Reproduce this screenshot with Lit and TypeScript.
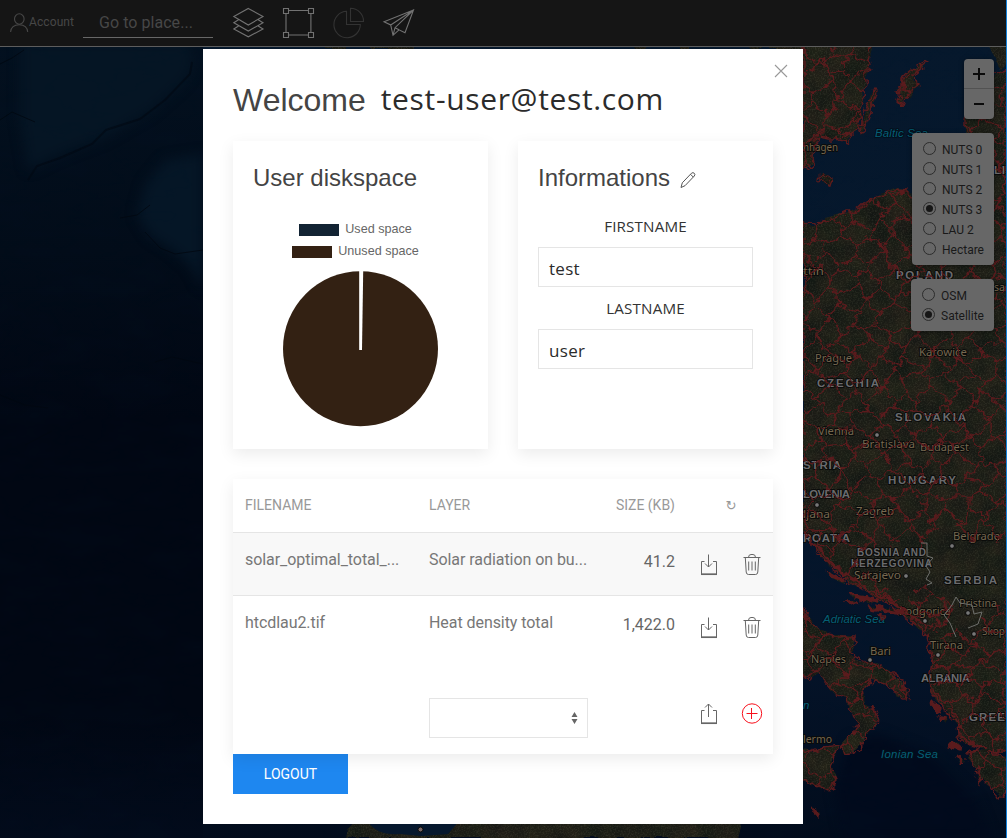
import { LitElement, html, css, svg } from "lit";
import { customElement, property } from "lit/decorators.js";

const SWEDEN =
  "M803 40H873L870 52L868 60L870 68L865 76L867 84L863 92L864 100L860 108L861 118L858 124L860 128L852 134L847 142L838 139L828 139L820 137L814 146L813 155L814 164L808 169L803 168Z";
const GOTLAND = "M920 64L927 62L924 67L916 74L914 80L919 84L913 88L911 95L905 99L902 106L899 103L901 95L897 91L902 88L902 80L907 73L912 69L917 70Z";
const OLAND = "M874 88L877 91L873 105L868 120L862 135L860 130L864 114L870 100Z";
const BORNHOLM = "M822 173L832 179L830 186L821 180Z";
const CONTINENT =
  "M803 221L812 226L826 219L845 214L855 211L864 203L880 195L897 190L907 191L912 196L920 200L935 195L965 170L965 119L970 96L990 82L995 74L1007 70V752L985 752L1007 757V790L999 798L993 788L987 786L982 778L980 784L976 768L968 758L970 750L984 748L968 744L959 736L958 724L948 714L940 702L931 692L929 680L932 662L929 645L926 633L915 624L904 617L892 606L870 594L850 582L830 566L818 552L811 540L803 530Z";
const ITALY =
  "M795 595L803 608L812 624L822 632L832 636L853 636L855 644L850 652L862 660L878 666L892 673L904 681L908 692L906 700L897 694L895 689L885 684L872 681L862 690L864 704L875 710L878 718L877 727L869 730L864 743L855 753L845 755L842 745L852 734L858 724L850 711L846 697L835 693L825 682L818 672L808 677L795 670Z";
const SICILY = "M795 748L812 752L825 747L841 745L834 757L831 768L836 779L830 791L818 787L795 776Z";
const ISLANDS =
  "M812 807L820 813L817 816ZM828 572L845 580L846 583L831 577ZM850 594L880 600L878 603L854 598ZM868 606L900 611L899 614L872 609ZM845 602L856 602L850 605ZM876 616L886 616L881 618ZM932 700L940 708L938 712L933 706ZM950 742L960 744L959 750L951 748ZM957 756L964 762L960 764ZM939 717L946 718L943 722Z";
const NORTH = "M325 40H345V49H325ZM368 40H416L412 49H372ZM628 40H652L645 49H634ZM680 40H690V49H680ZM745 40H803V60L795 49H750Z";
const AFRICA =
  "M345 838Q348 822 372 815L745 815L738 838ZM985 40H1007V62L1000 72L996 58Z";
const BAY = "M368 822Q378 836 400 834L421 836L448 834L460 820Z";
const NUTS =
  "M803 40H1007V540L990 545L972 540L960 530L945 520L928 545L890 545L850 552L868 575L890 590L905 605L915 590L925 588L952 605L948 625L930 628L928 640L957 630L957 652L953 680L948 690L945 760L803 800V660H803ZM950 632L1007 600V838H950L945 705Z";

/* Honeycomb of jittered vertices used for the administrative borders. */
function borderMesh(): string {
  let seed = 41;
  const rnd = () => {
    seed = (seed * 16807) % 2147483647;
    return seed / 2147483647;
  };
  const w = 13;
  const h = 17;
  const pts: number[][][] = [];
  for (let r = 0; r < 50; r++) {
    const row: number[][] = [];
    for (let c = 0; c < 19; c++) {
      const off = (r + c) % 2 ? 5 : -5;
      row.push([790 + c * w + (rnd() - 0.5) * 12, 38 + r * h + off + (rnd() - 0.5) * 11]);
    }
    pts.push(row);
  }
  let d = "";
  for (let r = 0; r < 50; r++) {
    d += "M" + pts[r].map((p) => p[0].toFixed(1) + " " + p[1].toFixed(1)).join("L");
    if (r < 49) {
      for (let c = 0; c < 19; c++) {
        if ((r + c) % 2) {
          const a = pts[r][c];
          const b = pts[r + 1][c];
          d += `M${a[0].toFixed(1)} ${a[1].toFixed(1)}L${b[0].toFixed(1)} ${b[1].toFixed(1)}`;
        }
      }
    }
  }
  return d;
}
const MESH = borderMesh();

type Label = [string, number, number, number];
const CITIES: Label[] = [
  ["nhagen", 803, 151, 35], ["ttin", 803, 275, 21], ["Prague", 815, 362, 37], ["Katowice", 919, 356, 48],
  ["Vienna", 818, 435, 36], ["Bratislava", 862, 448, 53], ["Budapest", 920, 451, 49], ["Zagreb", 856, 515, 38],
  ["ljana", 803, 518, 27], ["Belgrade", 953, 540, 47], ["Sarajevo", 854, 579, 47], ["Podgorica", 899, 615, 52],
  ["Pristina", 959, 607, 38], ["Skop", 982, 635, 23], ["Tirana", 930, 649, 33], ["Bari", 870, 655, 21],
  ["Naples", 811, 663, 35], ["lermo", 803, 743, 29], ["sa", 994, 291, 11],
];
const COUNTRIES: Label[] = [
  ["POLAND", 896, 279, 57], ["CZECHIA", 817, 387, 62], ["SLOVAKIA", 895, 421, 71], ["HUNGARY", 888, 484, 68],
  ["STRIA", 803, 469, 38], ["LOVENIA", 803, 498, 47], ["ROATIA", 803, 542, 47],
  ["SERBIA", 944, 584, 53], ["ALBANIA", 921, 682, 49], ["GREE", 969, 721, 36], ["LI", 994, 174, 11],
];
const SMALL: Label[] = [["BOSNIA AND", 857, 556, 69], ["HERZEGOVINA", 851, 567, 81]];
const SEAS: Label[] = [["Baltic Sea", 875, 137, 53], ["Adriatic Sea", 823, 623, 62], ["Ionian Sea", 881, 758, 57], ["n", 803, 709, 7]];
const DOTS = [[877, 435], [817, 505], [952, 546], [906, 576], [925, 621], [968, 613], [974, 634], [938, 655], [870, 660]];

@customElement("satellite-map")
class SatelliteMap extends LitElement {
  static styles = css`
    :host { display: block; }
    .map { display: block; width: 1007px; height: 838px; }
    filter { color-interpolation-filters: sRGB; }
    .label { paint-order: stroke; stroke: #0a0b0a; stroke-width: 2px; stroke-linejoin: round; }
    .city { font: 11.5px "Noto Sans", sans-serif; fill: #75674f; }
    .country { font: bold 11.5px "Liberation Sans", sans-serif; fill: #6b6b6e; }
    .small { font: bold 10px "Liberation Sans", sans-serif; fill: #6b6b6e; }
    .sea { font: italic 11.5px "Liberation Sans", sans-serif; fill: #055f76; stroke: #03101c; }
  `;

  private labels(items: Label[], kind: string) {
    return items.map(
      ([t, x, y, w]) =>
        svg`<text class="label ${kind}" x=${x} y=${y} textLength=${w} lengthAdjust=${kind === "city" ? "spacingAndGlyphs" : "spacing"}>${t}</text>`
    );
  }

  render() {
    const land = [SWEDEN, GOTLAND, OLAND, BORNHOLM, CONTINENT, ITALY, SICILY, ISLANDS, NORTH, AFRICA].join("");
    return html`<svg class="map" viewBox="0 0 1007 838">
      <defs>
        <linearGradient id="sea" x1="0" y1="0" x2="0" y2="1">
          <stop offset="0" stop-color="#06182c" /><stop offset=".55" stop-color="#05172d" />
          <stop offset=".8" stop-color="#041328" /><stop offset="1" stop-color="#020c1c" />
        </linearGradient>
        <linearGradient id="ocean" x1="0" y1="0" x2="0" y2="1">
          <stop offset="0" stop-color="#031120" /><stop offset=".3" stop-color="#020c19" />
          <stop offset=".5" stop-color="#010713" /><stop offset=".85" stop-color="#010713" />
          <stop offset="1" stop-color="#020b1b" />
        </linearGradient>
        <filter id="soft" x="-20%" y="-20%" width="140%" height="140%"><feGaussianBlur stdDeviation="6" /></filter>
        <filter id="ground" filterUnits="userSpaceOnUse" x="320" y="40" width="690" height="800">
          <feTurbulence type="fractalNoise" baseFrequency=".045" numOctaves="4" seed="5" result="broad" />
          <feColorMatrix in="broad" values=".1 0 0 0 .055  .06 .03 0 0 .065  .03 0 0 0 .068  0 0 0 0 1" result="tone" />
          <feTurbulence type="fractalNoise" baseFrequency=".65" numOctaves="2" seed="9" />
          <feColorMatrix values=".3 0 0 0 -.13  .3 0 0 0 -.13  .25 0 0 0 -.11  0 0 0 0 1" result="grain" />
          <feComposite in="tone" in2="grain" operator="arithmetic" k2="1" k3=".6" result="mix" />
          <feDisplacementMap in="SourceAlpha" in2="broad" scale="7" xChannelSelector="R" yChannelSelector="G" result="shape" />
          <feComposite in="mix" in2="shape" operator="in" />
        </filter>
        <filter id="rough" filterUnits="userSpaceOnUse" x="800" y="40" width="210" height="800">
          <feTurbulence type="fractalNoise" baseFrequency=".13" numOctaves="2" seed="3" />
          <feDisplacementMap in="SourceGraphic" scale="11" xChannelSelector="R" yChannelSelector="G" />
        </filter>
        <filter id="relief" filterUnits="userSpaceOnUse" x="0" y="40" width="1007" height="800">
          <feTurbulence type="fractalNoise" baseFrequency=".018 .04" numOctaves="5" seed="8" />
          <feColorMatrix values="0 0 0 0 .03  0 0 0 0 .1  0 0 0 0 .18  .9 0 0 0 -.34" />
        </filter>
        <clipPath id="land"><path d=${SWEDEN + GOTLAND + OLAND + CONTINENT + ITALY + SICILY} /></clipPath>
        <clipPath id="nuts"><path d=${NUTS} /></clipPath>
      </defs>
      <rect width="1007" height="838" fill="url(#sea)" />
      <rect width="203" height="838" fill="url(#ocean)" />
      <g filter="url(#soft)">
        <path d="M20 40H185Q200 62 184 82L150 112L105 138L60 155L28 170L20 120Z" fill="#051524" />
        <path d="M203 154L165 160L145 185L137 215L150 236L172 250L190 265L203 290Z" fill="#051626" />
        <path d="M850 740L880 735L930 755L975 800L990 838H845L835 790Z" fill="#010a1c" />
      </g>
      <rect y="47" width="1007" height="791" filter="url(#relief)" opacity=".25" />
      <path d="M192 62L190 74L165 100L140 119L106 130L92 144L60 158L37 166L28 180" fill="none" stroke="#010912" stroke-width="2" opacity=".6" />
      <path d="M150 205L137 215L120 218M203 250L175 254L160 248L145 232M0 64L12 58L24 50M155 362L172 357L203 364M0 395L25 405L48 408M25 445L52 431M0 120L12 112L35 122" fill="none" stroke="#010710" stroke-width="1" opacity=".8" />
      <path d=${land} filter="url(#ground)" />
      <path d=${BAY} fill="#06182e" />
      ${this.labels(CITIES, "city")} ${this.labels(COUNTRIES, "country")}
      ${this.labels(SMALL, "small")} ${this.labels(SEAS, "sea")}
      <g filter="url(#rough)" fill="none" stroke="#5a1b1d" stroke-width="1.4">
        <g clip-path="url(#nuts)">
          <g clip-path="url(#land)"><path d=${MESH} /></g>
          <path d=${CONTINENT} />
        </g>
        <path d=${SWEDEN + GOTLAND + OLAND + BORNHOLM + ITALY + SICILY} />
        <path d=${ISLANDS} fill="#5a1b1d" />
        <path d="M811 538L830 562L868 590L892 602L928 628" stroke-width="2.5" />
        <path d="M914 592L925 588L952 605L945 622L934 630" />
      </g>
      <g fill="none" stroke="#6d6e6b" stroke-width="1" stroke-linejoin="round">
        <path d="M921 543L927 543L927 556L933 558L926 566L930 572L926 579L932 583L927 585" />
        <path d="M944 615L952 605L956 597L960 603L972 605L974 614L982 612L978 624L968 628M944 615L950 623L956 637" />
      </g>
      ${DOTS.map(([x, y]) => svg`<circle cx=${x} cy=${y} r="2.4" fill="#777" stroke="#080808" />`)}
      <circle cx="420.500" cy="829.500" r="2.500" fill="#766" stroke="#080808" />
      <rect x="1006" width="1" height="838" fill="#1583dc" />
    </svg>`;
  }
}

@customElement("top-bar")
class TopBar extends LitElement {
  static styles = css`
    :host { display: flex; box-sizing: border-box; height: 47px; width: 1006px; background: #151515;
      border-bottom: 1px solid #5d5d5d; font-family: Roboto, sans-serif; color: #474747; }
    .account { display: flex; align-items: center; height: 43px; padding-left: 10px; width: 83px; box-sizing: border-box; font-size: 12px; letter-spacing: .1px; }
    .place { box-sizing: border-box; width: 130px; height: 38px; border-bottom: 1px solid #676767;
      padding: 4px 0 0 16px; font-size: 16px; line-height: 37px; letter-spacing: .05px; }
    .tools { display: block; margin-left: 17px; }
    svg { fill: none; flex: none; }
  `;
  render() {
    return html`
      <div class="account">
        <svg width="19" height="24" viewBox="0 0 19 24" stroke="#474747" stroke-width="1.1">
          <ellipse cx="9.300" cy="9" rx="4.800" ry="5.200" /><path d="M.6 22C1 17.500 4.500 14.800 9.300 14.800S17.300 17.500 17.700 22" />
        </svg>
        <span>Account</span>
      </div>
      <div class="place">Go to place...</div>
      <svg class="tools" width="190" height="46" viewBox="230 0 190 46" stroke="#727272" stroke-width="1.1">
        <path d="M248.300 8.500L263 16.500L248.300 25L233.800 16.500ZM238.500 19.800L233.800 22.700L248.300 31L263 22.700L258.200 19.800M238.500 26L233.800 29L248.300 36.800L263 29L258.200 26" />
        <path d="M288.500 10.500H308.500M288.500 35H308.500M286 13V32.500M310.900 13V32.500" />
        <path d="M283.500 8.500h5v5h-5zM308.500 8.500h5v5h-5zM283.500 32.500h5v5h-5zM308.500 32.500h5v5h-5z" />
        <path stroke="#333" d="M346.500 11.300A13.200 13.200 0 1 0 360.300 24.500H346.500ZM350.500 8.300V21.500H363.500A13 13 0 0 0 350.500 8.300Z" />
        <path d="M413.500 10L384 21.700L390.700 25L393 35.300L399 29.800L405 32.800ZM413.500 10L390.700 25M413.500 10L395 27.700L393 35.300M395 27.700L399 29.800" />
      </svg>`;
  }
}

@customElement("radio-panel")
class RadioPanel extends LitElement {
  @property({ attribute: false }) options: string[] = [];
  @property() selected = "";
  static styles = css`
    :host { display: block; box-sizing: border-box; background: #676767; border-radius: 4px; padding: 6px 10px;
      font: 12px/20px Roboto, sans-serif; color: #191919; box-shadow: 0 1px 5px rgba(0, 0, 0, .4); }
    .row { display: flex; height: 20px; gap: 6px; }
    .text { padding-top: 1px; }
    .radio { box-sizing: border-box; width: 13px; height: 13px; border: 1px solid #2c2c2c; border-radius: 50%; margin: 3px 0 0 1px; padding: 2px; }
    .on::before { content: ""; display: block; width: 7px; height: 7px; border-radius: 50%; background: #161616; }
  `;
  render() {
    return this.options.map(
      (o) => html`<div class="row"><span class="radio ${o === this.selected ? "on" : ""}"></span><span class="text">${o}</span></div>`
    );
  }
}

const tray = (up: boolean) => html`<svg width="20" height="24" viewBox="0 0 20 24" fill="none" stroke="#666">
  <path d="M5.500 8.500H2.500V21.500H17.500V8.500H14" /><path d="M2 21.200H18" stroke-width="1.700" />
  ${up ? svg`<path d="M9.500 15V2M6 5.500L9.500 2L13 5.500" />` : svg`<path d="M9.500 1.500V14M6 10.500L9.500 14L13 10.500" />`}
</svg>`;
const trash = html`<svg width="20" height="24" viewBox="0 0 20 24" fill="none" stroke="#666">
  <path d="M1.500 4.500H18.500M6.500 4.500Q6.500 1.500 9 1.500H11Q13.500 1.500 13.500 4.500M3.300 4.500L4.200 19Q4.300 21.500 6.500 21.500H13.500Q15.700 21.500 15.800 19L16.700 4.500M6.700 8.500V17.500M10 8.500V17.500M13.300 8.500V17.500" />
</svg>`;
const plus = html`<svg width="22" height="22" viewBox="0 0 22 22" fill="none" stroke="#f8101c"><circle cx="11" cy="11.500" r="9.700" /><path d="M5.500 11.500H16.500M10.500 6V17" /></svg>`;

@customElement("account-dialog")
class AccountDialog extends LitElement {
  static styles = css`
    :host { display: block; box-sizing: border-box; width: 600px; height: 775px; background: #fff; padding: 30px;
      position: relative; font: 16px/24px Roboto, sans-serif; color: #666; }
    .close { position: absolute; right: 15px; top: 15px; }
    svg { display: block; }
    .welcome { display: flex; align-items: center; height: 42px; margin: 0 0 20px; font: 32px/42px "Liberation Sans", sans-serif; color: #444; }
    .mail { font: 30px/38px "Open Sans", sans-serif; letter-spacing: .65px; color: #2b2b2b; margin-left: 15px; padding-bottom: 2px; white-space: nowrap; }
    .cards { display: grid; grid-template-columns: 255px 255px; gap: 30px; }
    .card { box-sizing: border-box; height: 308px; background: #fff; padding: 20px; box-shadow: 0 5px 15px rgba(0, 0, 0, .08); }
    .title { display: flex; margin: 0; height: 34px; font: 24px/34px "Liberation Sans", sans-serif; color: #444; }
    .pencil { margin: 9px 0 0 9px; }
    .legend { display: flex; flex-direction: column; align-items: center; padding: 23px 10px 0 0; font: 12.6px/22px "Liberation Sans", sans-serif; }
    .key { display: flex; align-items: center; gap: 6px; height: 22px; white-space: nowrap; }
    .swatch { width: 40px; height: 12px; margin-top: 1px; }
    .used { background: #122333; }
    .unused { background: #332113; }
    .pie { margin: 9px 0 0 30px; }
    .form { padding-top: 20px; display: flex; flex-direction: column; }
    .caption { font: 15.2px/23px "Open Sans", sans-serif; color: #333; text-align: center; height: 22px; letter-spacing: .15px; }
    .field { box-sizing: border-box; height: 40px; border: 1px solid #e5e5e5; margin: 10px 0; padding: 0 10px;
      font: 17px/42px "Open Sans", sans-serif; letter-spacing: .3px; color: #2b2b2b; }
    .files { position: relative; margin-top: 30px; height: 275px; background: #fff; box-shadow: 0 5px 15px rgba(0, 0, 0, .08); }
    .row { display: grid; grid-template-columns: 184px 183px 87px 86px; box-sizing: border-box; height: 63px; border-bottom: 1px solid #e5e5e5; color: #777; }
    .head { height: 54px; font-size: 14px; color: #999; }
    .head .cell { padding-top: 14px; letter-spacing: 0; }
    .striped { background: #f8f8f8; }
    .plain { border-color: transparent; }
    .last { border: 0; height: 95px; }
    .cell { padding: 15px 12px 0; white-space: nowrap; letter-spacing: -.06px; }
    .size { text-align: right; color: #666; padding-top: 17px; letter-spacing: 0; }
    .head .size { color: #999; }
    .actions { display: flex; gap: 23px; padding: 20px 0 0 12px; }
    .head .reload { padding: 15px 0 0 2px; text-align: center; font: 13px/24px "DejaVu Sans", sans-serif; }
    .upload { padding-top: 43px; gap: 22px; }
    .upload svg { flex: none; }
    .select { box-sizing: border-box; width: 159px; height: 40px; border: 1px solid #e5e5e5; margin: 39px 0 0 12px; display: flex; justify-content: flex-end; align-items: center; padding-right: 8px; }
    .logout { display: block; width: 115px; height: 40px; background: #1e87f0; color: #fff; border: 0; padding: 0; font: 14px/40px Roboto, sans-serif; text-align: center; }
  `;
  render() {
    return html`
      <svg class="close" width="14" height="14" viewBox="0 0 14 14" stroke="#999" stroke-width="1.100"><path d="M1 1L13 13M13 1L1 13" /></svg>
      <h1 class="welcome">Welcome <span class="mail">test-user@test.com</span></h1>
      <div class="cards">
        <section class="card">
          <h2 class="title">User diskspace</h2>
          <div class="legend">
            <div class="key"><span class="swatch used"></span>Used space</div>
            <div class="key"><span class="swatch unused"></span>Unused space</div>
          </div>
          <svg class="pie" width="156" height="156" viewBox="0 0 156 156">
            <circle cx="77.500" cy="77.700" r="77.500" fill="#332113" />
            <path d="M76.200 0H80.200L79 79H76.200Z" fill="#fff" />
          </svg>
        </section>
        <section class="card">
          <h2 class="title">Informations
            <svg class="pencil" width="18" height="20" viewBox="0 0 18 20" fill="none" stroke="#555">
              <path d="M2 17.500L3.300 12.800L12.500 3.200Q14 2 15.300 3.300Q16.500 4.500 15.300 6L6 15.700L2 17.500M11.500 4.300L14.300 7.100" />
            </svg>
          </h2>
          <div class="form">
            <div class="caption">FIRSTNAME</div><div class="field">test</div>
            <div class="caption">LASTNAME</div><div class="field">user</div>
          </div>
        </section>
      </div>
      <section class="files">
        <div class="row head"><span class="cell">FILENAME</span><span class="cell">LAYER</span><span class="cell size">SIZE (KB)</span><span class="cell reload">↻</span></div>
        <div class="row striped"><span class="cell">solar_optimal_total_...</span><span class="cell">Solar radiation on bu...</span><span class="cell size">41.2</span><span class="actions">${tray(false)}${trash}</span></div>
        <div class="row plain"><span class="cell">htcdlau2.tif</span><span class="cell">Heat density total</span><span class="cell size">1,422.0</span><span class="actions">${tray(false)}${trash}</span></div>
        <div class="row last"><span></span>
          <div class="select"><svg width="9" height="14" viewBox="0 0 9 14" fill="#666"><path d="M4.500 1L7.500 6H1.500ZM4.500 13L7.500 8H1.500Z" /></svg></div>
          <span></span><span class="actions upload">${tray(true)}${plus}</span></div>
      </section>
      <button class="logout">LOGOUT</button>`;
  }
}

@customElement("app-root")
class AppRoot extends LitElement {
  static styles = css`
    :host { display: block; position: relative; width: 1007px; height: 838px; overflow: hidden; background: #020c19; }
    .backdrop { position: absolute; inset: 0; }
    .page { position: relative; }
    .modal { margin: 2px 0 0 203px; }
    .controls { position: absolute; right: 13px; top: 59px; display: flex; flex-direction: column; align-items: flex-end; gap: 14px; }
    .zoom { width: 30px; height: 60px; background: #676767; border-radius: 4px; box-shadow: 0 1px 5px rgba(0, 0, 0, .5); }
    .zoom svg { display: block; }
    .nuts { width: 82px; height: 132px; }
    .base { width: 83px; height: 52px; }
  `;
  render() {
    return html`
      <satellite-map class="backdrop"></satellite-map>
      <div class="page">
        <top-bar></top-bar>
        <account-dialog class="modal"></account-dialog>
      </div>
      <div class="controls">
        <div class="zoom"><svg width="30" height="60" viewBox="0 0 30 60" stroke="#0a0a0a" stroke-width="2">
          <path d="M9 15H21M15 9V21M10 45H20" /><path d="M0 29.500H30" stroke="#525252" stroke-width="1" /></svg></div>
        <radio-panel class="nuts" .options=${["NUTS 0", "NUTS 1", "NUTS 2", "NUTS 3", "LAU 2", "Hectare"]} selected="NUTS 3"></radio-panel>
        <radio-panel class="base" .options=${["OSM", "Satellite"]} selected="Satellite"></radio-panel>
      </div>`;
  }
}
